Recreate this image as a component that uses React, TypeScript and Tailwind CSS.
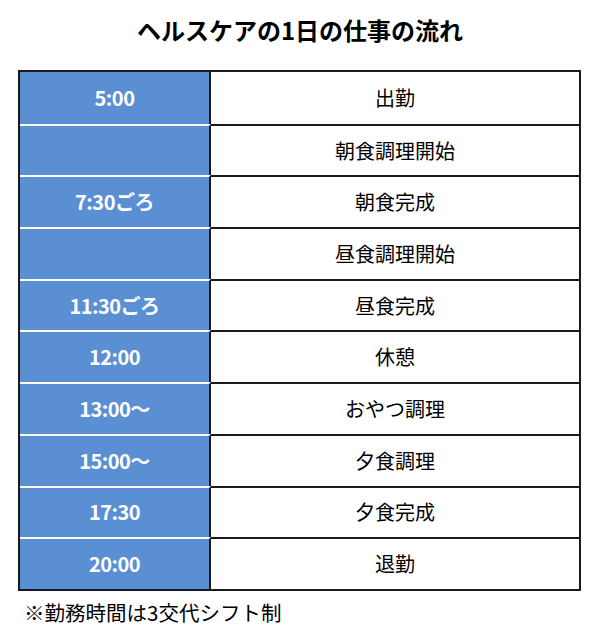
const rows: [string, string][] = [
  ['5:00', '出勤'],
  ['', '朝食調理開始'],
  ['7:30ごろ', '朝食完成'],
  ['', '昼食調理開始'],
  ['11:30ごろ', '昼食完成'],
  ['12:00', '休憩'],
  ['13:00～', 'おやつ調理'],
  ['15:00～', '夕食調理'],
  ['17:30', '夕食完成'],
  ['20:00', '退勤'],
];

export default function App() {
  return (
    <div
      className="w-[600px] h-[644px] bg-white text-black"
      style={{ fontFamily: '"Noto Sans CJK JP", "Noto Sans", sans-serif' }}
    >
      <h1 className="pt-[14px] h-[70px] text-center text-[24px] font-bold leading-[32px]">
        ヘルスケアの1日の仕事の流れ
      </h1>
      <div className="mx-[18px] w-[563px] border-2 border-[#1a1a1a]">
        {rows.map(([time, task], i) => (
          <div key={i} className="flex h-[51.7px]">
            <div
              className={`w-[191px] flex items-center justify-center bg-[#5b8fd4] text-white text-[20px] font-bold tracking-[-0.5px] border-r-2 border-[#1a1a1a] ${
                i > 0 ? 'border-t-2 border-t-white' : ''
              }`}
            >
              {time}
            </div>
            <div
              className={`flex-1 flex items-center justify-center text-[20px] ${
                i > 0 ? 'border-t-2 border-t-[#1a1a1a]' : ''
              }`}
            >
              {task}
            </div>
          </div>
        ))}
      </div>
      <p className="pl-[24px] pt-[6px] text-[20.5px] leading-[30px]">※勤務時間は3交代シフト制</p>
    </div>
  );
}
